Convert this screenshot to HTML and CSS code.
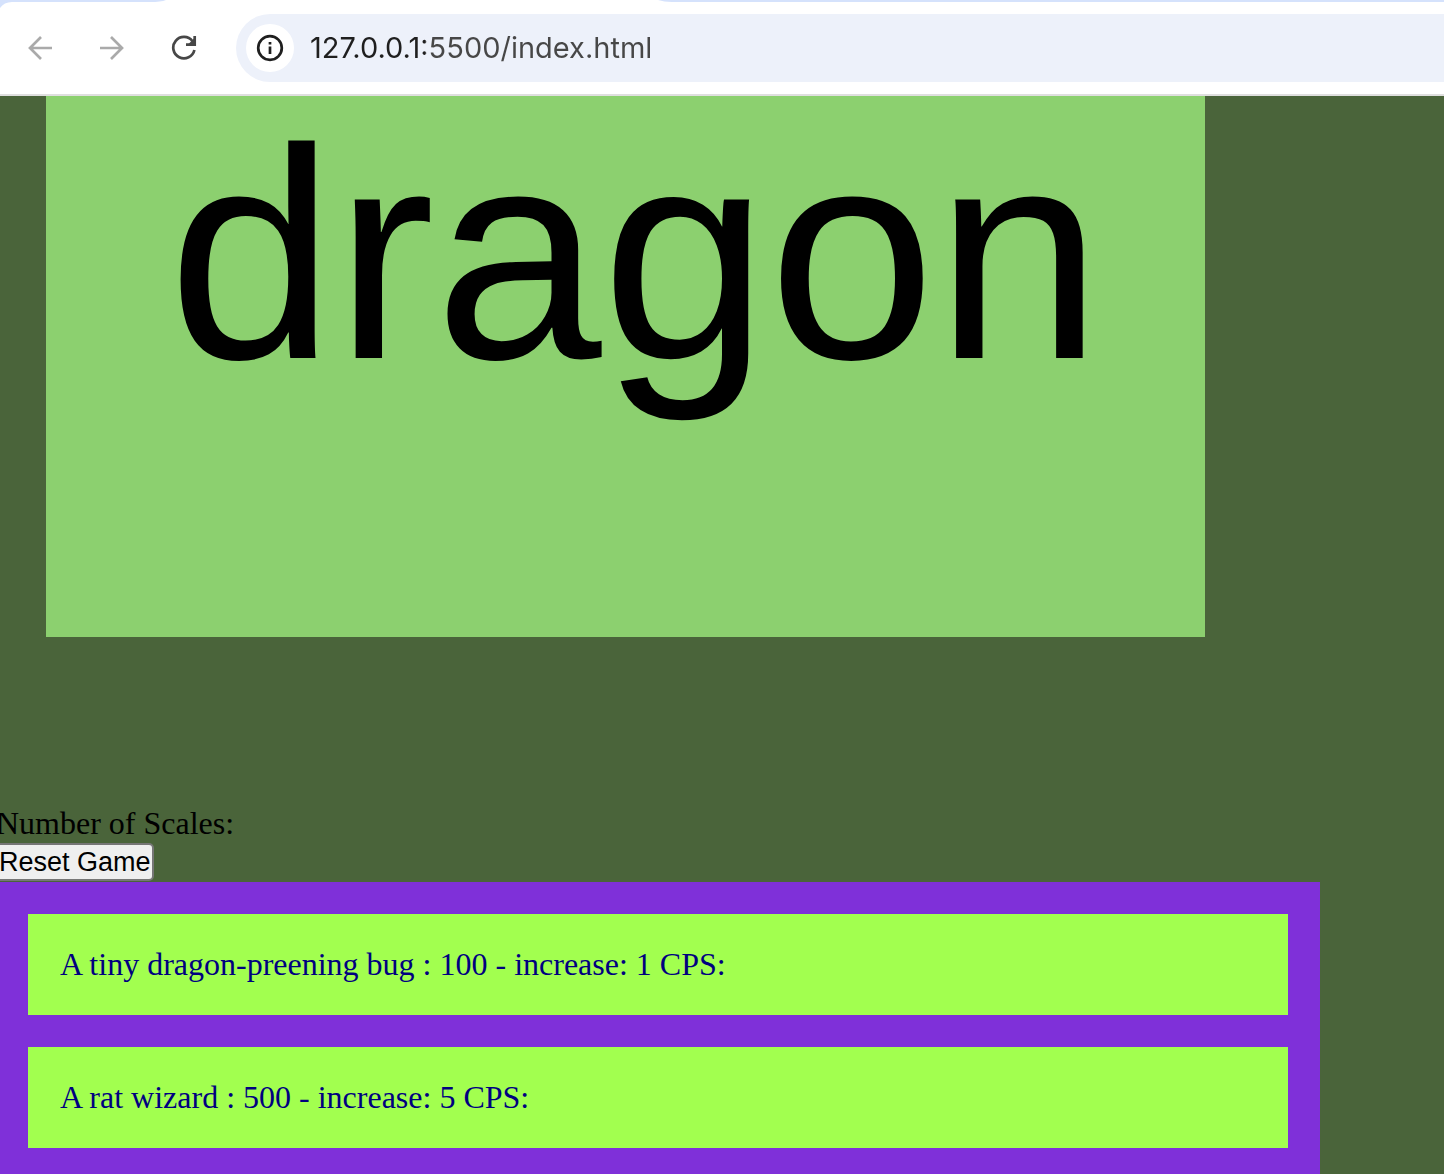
FILE: index.html
```html
<!DOCTYPE html>
<html lang="en">
<head>
<meta charset="utf-8">
<meta name="viewport" content="width=device-width, initial-scale=1">
<title>Dragon Clicker</title>
<link rel="stylesheet" href="styles.css">
</head>
<body>
<div class="window">
  <header class="browser">
    <svg class="tabs" width="1444" height="8" viewBox="0 0 1444 8" aria-hidden="true">
      <path fill="#d5e2fc" d="M0 0H166Q161 2 150 2H12Q4 2 0 8Z"/>
      <path fill="#d5e2fc" d="M658 0H1444V2H672Q664 2 658 0Z"/>
    </svg>
    <nav class="toolbar" aria-label="Browser">
      <button class="tool tool-off" type="button" aria-label="Back">
        <svg width="26" height="26" viewBox="0 0 26 26"><path d="M25 13H3M14 2L3 13L14 24"/></svg>
      </button>
      <button class="tool tool-off" type="button" aria-label="Forward">
        <svg width="26" height="26" viewBox="0 0 26 26"><path d="M1 13H23M12 2L23 13L12 24"/></svg>
      </button>
      <button class="tool" type="button" aria-label="Reload">
        <svg width="26" height="26" viewBox="0 0 26 26"><path d="M21.5 6.2A10.7 10.7 0 1 0 23.4 15"/><path d="M23.7 1V9.7H15"/><path class="solid" d="M17.5 9L23.5 3V9Z"/></svg>
      </button>
      <div class="address">
        <button class="info" type="button" aria-label="Site information">
          <svg width="28" height="28" viewBox="0 0 28 28"><circle cx="14" cy="14" r="11.8"/><path d="M14 12.6V20M14 8V10.6"/></svg>
        </button>
        <input class="url" type="text" aria-label="Address" value="127.0.0.1:5500/index.html" spellcheck="false">
      </div>
    </nav>
  </header>
  <main class="page">
    <div class="dragon">dragon</div>
    <p class="score">Number of Scales:</p>
    <button class="reset" type="button">Reset Game</button>
    <ul class="shop">
      <li class="upgrade">A tiny dragon-preening bug : 100 - increase: 1 CPS:</li>
      <li class="upgrade">A rat wizard : 500 - increase: 5 CPS:</li>
    </ul>
  </main>
</div>
</body>
</html>
```
FILE: styles.css
```css
* {
  box-sizing: border-box;
}

body {
  margin: 0;
  background: #4a643a;
}

.window {
  display: flex;
  flex-direction: column;
  height: 100vh;
  overflow: hidden;
}

.browser {
  position: relative;
  flex: none;
  background: #fff;
  border-bottom: 2px solid #dfdfdf;
}

.tabs {
  position: absolute;
  top: 0;
  left: 0;
}

.toolbar {
  display: flex;
  align-items: center;
  gap: 24px;
  padding: 14px 0 12px 16px;
}

.tool {
  display: flex;
  align-items: center;
  justify-content: center;
  width: 48px;
  height: 48px;
  padding: 0;
  border: 0;
  background: none;
  color: #474747;
}

.tool-off {
  color: #aaa;
}

.tool svg,
.info svg {
  fill: none;
  stroke: currentColor;
  stroke-width: 2.7;
}

.tool .solid {
  fill: currentColor;
  stroke: none;
}

.address {
  display: flex;
  flex: 1;
  align-items: center;
  gap: 16px;
  height: 68px;
  margin-left: 4px;
  padding-left: 10px;
  border-radius: 34px 0 0 34px;
  background: #edf1fa;
}

.info {
  display: flex;
  flex: none;
  align-items: center;
  justify-content: center;
  width: 48px;
  height: 48px;
  padding: 0;
  border: 0;
  border-radius: 50%;
  background: #fff;
  color: #1f1f1f;
}

.url {
  flex: 1;
  min-width: 0;
  padding: 0;
  border: 0;
  outline: 0;
  background: linear-gradient(90deg, #1f1f1f 115px, #474747 115px);
  background-clip: text;
  -webkit-text-fill-color: transparent;
  color: #474747;
  font: 29px/36px Inter, sans-serif;
}

.page {
  flex: 1;
  min-height: 0;
  margin-left: -4px;
  font: 32px/37px "Liberation Serif", "Times New Roman", serif;
}

.dragon {
  width: 90%;
  max-width: 1159px;
  height: 541px;
  margin: 0 0 168px 50px;
  padding-left: 122px;
  background: #8cd06f;
  color: #000;
  font: 300px/316px "Liberation Sans", Arial, sans-serif;
}

.score {
  margin: 0 0 1px;
}

.reset {
  display: block;
  height: 38px;
  margin-bottom: 1px;
  padding: 0 1px;
  border: 2px solid #767676;
  border-radius: 5px;
  background: #efefef;
  color: #000;
  font: 27px/32px "Liberation Sans", Arial, sans-serif;
}

.shop {
  display: flex;
  flex-direction: column;
  gap: 32px;
  max-width: 1324px;
  margin: 0;
  padding: 32px;
  background: #7f30d9;
  list-style: none;
}

.upgrade {
  padding: 32px;
  background: #a2ff4f;
  color: navy;
}
```
